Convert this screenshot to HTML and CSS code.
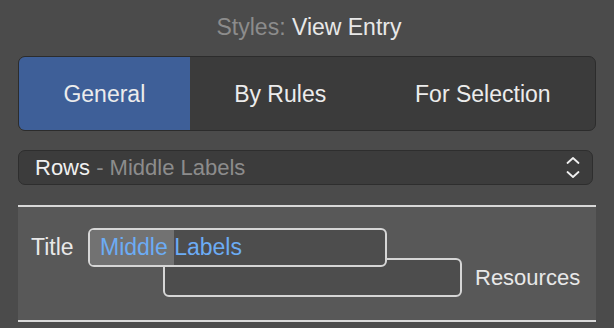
FILE: index.html
```html
<!DOCTYPE html>
<html lang="en">
    <head>
        <meta charset="UTF-8">
        <title>Styles: View Entry</title>
        <link rel="stylesheet" href="styles.css">
    </head>
    <body>
        <div class="panel">
            <h1 class="panel-title"><span class="dim">Styles:</span> View Entry</h1>
            <div class="segments">
                <div class="segment active">General</div>
                <div class="segment">By Rules</div>
                <div class="segment">For Selection</div>
            </div>
            <div class="popup">
                <span class="popup-text">Rows <span class="dim">- Middle Labels</span></span>
                <svg class="chevrons" width="16" height="24" viewBox="0 0 16 24">
                    <path d="M2.5 7 L8 2 L13.5 7" fill="none" stroke="#f0f0f0" stroke-width="1.8" stroke-linecap="round" stroke-linejoin="round"/>
                    <path d="M2.5 16 L8 21 L13.5 16" fill="none" stroke="#f0f0f0" stroke-width="1.8" stroke-linecap="round" stroke-linejoin="round"/>
                </svg>
            </div>
            <div class="canvas">
                <div class="canvas-grid">
                    <div class="label title-label">Title</div>
                    <div class="field field-top"><span class="sel">Middle </span>Labels</div>
                    <div class="field field-bottom"></div>
                    <div class="label res-label">Resources</div>
                </div>
            </div>
        </div>
    </body>
</html>
```

FILE: styles.css
```css
*{
    padding: 0;
    margin: 0;
    box-sizing: border-box;
}
body {
    background-color: #4b4b4b;
    font-family: "Liberation Sans", Arial, sans-serif;
    color: #e8e8e8;
}
.panel {
    padding: 13px 18px 0 18px;
}
.dim {
    color: #8c8c8c;
}
.panel-title {
    font-size: 23px;
    font-weight: normal;
    line-height: 28px;
    text-align: center;
    padding-left: 4px;
}
.segments {
    display: flex;
    margin-top: 15px;
    height: 75px;
    background: #3b3b3b;
    border: 1px solid #2c2c2c;
    border-radius: 7px;
    overflow: hidden;
}
.segment {
    flex: 1 1 auto;
    display: flex;
    align-items: center;
    justify-content: center;
    font-size: 23px;
    padding-top: 2px;
    color: #ececec;
}
.segment.active {
    background: #3e5f98;
}
.popup {
    display: flex;
    align-items: center;
    justify-content: space-between;
    margin: 19px 3px 0 0;
    height: 35px;
    background: #3c3c3c;
    border: 1px solid #2e2e2e;
    border-radius: 7px;
    padding: 0 11px 0 16px;
    font-size: 22px;
}
.popup-text {
    color: #f0f0f0;
}
.chevrons {
    display: block;
}
.canvas {
    margin-top: 20px;
    background: #585858;
    border-top: 2px solid #d8d8d8;
    border-bottom: 2px solid #d8d8d8;
    height: 117px;
    padding: 21px 0 0 13px;
}
.canvas-grid {
    display: grid;
    grid-template-columns: 57px 75px 224px 75px 13px auto;
    grid-template-rows: 30px 9px 30px;
}
.label {
    font-size: 23px;
    color: #e8e8e8;
    align-self: center;
}
.title-label {
    grid-column: 1;
    grid-row: 1 / 3;
}
.res-label {
    grid-column: 6;
    grid-row: 2 / 4;
    font-size: 22px;
}
.field {
    height: 39px;
    border: 2px solid #d6d6d6;
    border-radius: 6px;
    background: #4d4d4d;
    overflow: hidden;
}
.field-top {
    grid-column: 2 / 4;
    grid-row: 1 / 3;
    z-index: 1;
    font-size: 23px;
    line-height: 35px;
    white-space: pre;
    color: #6cacf5;
}
.field-bottom {
    grid-column: 3 / 5;
    grid-row: 2 / 4;
}
.sel {
    display: inline-block;
    height: 35px;
    padding-left: 10px;
    background: #727272;
}
```
